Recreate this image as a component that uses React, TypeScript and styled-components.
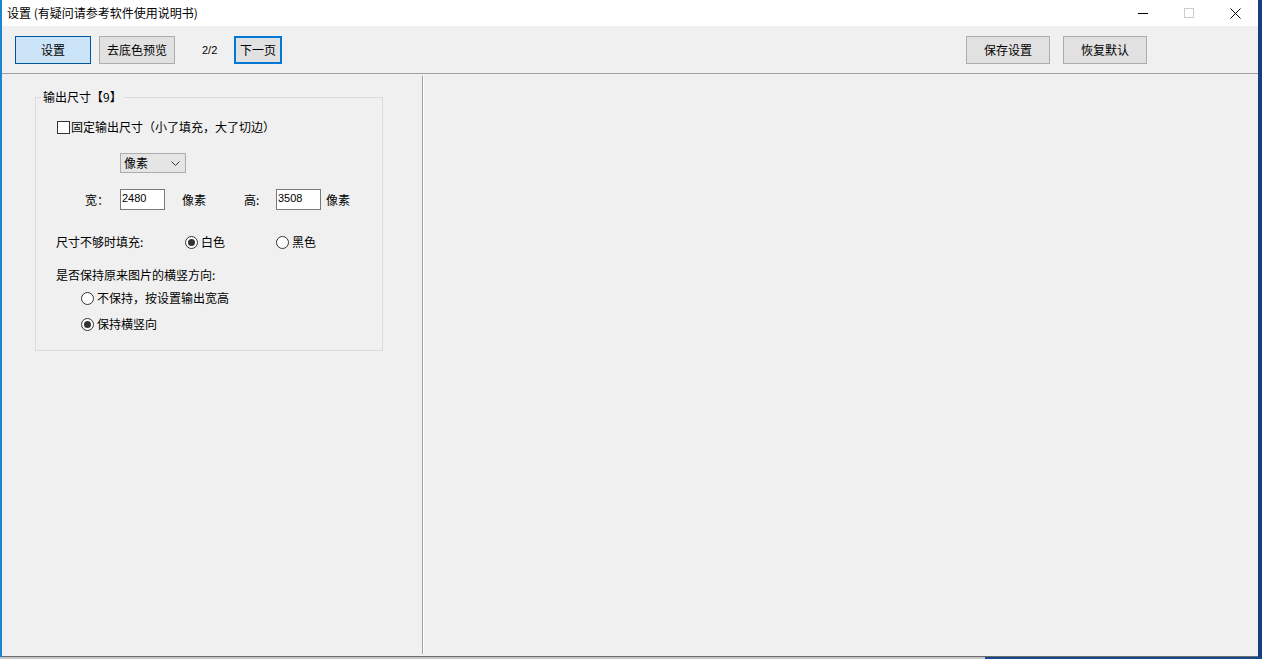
import styled, { createGlobalStyle } from 'styled-components';

const GlobalStyle = createGlobalStyle`
  html, body {
    margin: 0;
    padding: 0;
    overflow: hidden;
  }
  body {
    font-family: "Noto Sans CJK SC", "Liberation Sans", sans-serif;
    font-size: 12px;
    color: #000;
  }
`;

const Desktop = styled.div`
  width: 1262px;
  height: 659px;
  display: flex;
  flex-direction: column;
  background: #17488c;
`;

const Main = styled.div`
  display: flex;
  height: 657px;
`;

const LeftEdge = styled.div`
  width: 2px;
  background: #1b86cf;
`;

const RightEdge = styled.div`
  flex: 1;
  background: #163f7f;
`;

const Window = styled.div`
  width: 1256px;
  display: flex;
  flex-direction: column;
  background: #f0f0f0;
  border-bottom: 1px solid #6b6b6b;
  box-sizing: border-box;
`;

const BottomStrip = styled.div`
  display: flex;
  height: 2px;
`;

const StripPart = styled.div<{ $w?: number; $color: string }>`
  width: ${({ $w }) => ($w ? `${$w}px` : 'auto')};
  flex: ${({ $w }) => ($w ? 'none' : '1')};
  background: ${({ $color }) => $color};
`;

const TitleBar = styled.div`
  height: 26px;
  background: #fff;
  display: flex;
  align-items: center;
  flex-shrink: 0;
`;

const Title = styled.div`
  padding-left: 5px;
  line-height: 16px;
  flex: 1;
  white-space: nowrap;
`;

const Controls = styled.div`
  display: flex;
  height: 26px;
`;

const CtrlBtn = styled.div`
  width: 46px;
  height: 26px;
  display: flex;
  align-items: center;
  justify-content: center;
`;

const Toolbar = styled.div`
  height: 47px;
  display: flex;
  align-items: center;
  padding: 0 111px 0 13px;
  border-bottom: 1px solid #a0a0a0;
  flex-shrink: 0;
`;

const Btn = styled.div<{ $w: number; $variant?: 'selected' | 'focus' }>`
  width: ${({ $w }) => $w}px;
  height: 28px;
  box-sizing: border-box;
  display: flex;
  align-items: center;
  justify-content: center;
  line-height: 16px;
  background: ${({ $variant }) => ($variant === 'selected' ? '#cce4f7' : '#e1e1e1')};
  border: ${({ $variant }) =>
    $variant === 'selected'
      ? '1px solid #005499'
      : $variant === 'focus'
      ? '2px solid #0078d7'
      : '1px solid #adadad'};
`;

const Gap = styled.div<{ $w: number }>`
  width: ${({ $w }) => $w}px;
  flex-shrink: 0;
`;

const Spacer = styled.div`
  flex: 1;
`;

const PageNum = styled.div`
  font-family: "Liberation Sans", sans-serif;
  font-size: 11px;
  width: 32px;
  line-height: 16px;
`;

const Body = styled.div`
  flex: 1;
  display: flex;
  padding-top: 1px;
  min-height: 0;
`;

const LeftPanel = styled.div`
  width: 420px;
  padding: 22px 0 0 33px;
  box-sizing: border-box;
`;

const VDivider = styled.div`
  width: 1px;
  margin: 1px 0 2px;
  background: #a0a0a0;
  border-right: 1px solid #fff;
`;

const RightPanel = styled.div`
  flex: 1;
`;

const GroupBox = styled.div`
  position: relative;
  width: 348px;
  height: 254px;
  box-sizing: border-box;
  border: 1px solid #dcdcdc;
`;

const Legend = styled.span`
  position: absolute;
  top: -9px;
  left: 5px;
  padding: 0 2px;
  background: #f0f0f0;
  line-height: 16px;
`;

const Row = styled.div<{ $top: number; $indent: number; $h?: number }>`
  display: flex;
  align-items: center;
  margin-top: ${({ $top }) => $top}px;
  padding-left: ${({ $indent }) => $indent}px;
  height: ${({ $h }) => $h ?? 16}px;
  line-height: 16px;
  white-space: nowrap;
`;

const Label = styled.span<{ $w?: number; $ml?: number }>`
  display: inline-block;
  width: ${({ $w }) => ($w ? `${$w}px` : 'auto')};
  margin-left: ${({ $ml }) => $ml ?? 0}px;
  flex-shrink: 0;
`;

const CheckBox = styled.span`
  width: 13px;
  height: 13px;
  box-sizing: border-box;
  border: 1px solid #333;
  background: #fff;
  margin-right: 1px;
  flex-shrink: 0;
`;

const Radio = styled.span<{ $checked?: boolean }>`
  width: 13px;
  height: 13px;
  box-sizing: border-box;
  border: 1px solid #333;
  border-radius: 50%;
  background: #fff;
  margin-right: 3px;
  flex-shrink: 0;
  display: flex;
  align-items: center;
  justify-content: center;

  &::after {
    content: '';
    display: ${({ $checked }) => ($checked ? 'block' : 'none')};
    width: 7px;
    height: 7px;
    border-radius: 50%;
    background: #333;
  }
`;

const Option = styled.span<{ $w?: number }>`
  display: inline-flex;
  align-items: center;
  width: ${({ $w }) => ($w ? `${$w}px` : 'auto')};
  flex-shrink: 0;
`;

const Select = styled.div`
  width: 66px;
  height: 20px;
  box-sizing: border-box;
  border: 1px solid #adadad;
  background: #e5e5e5;
  display: flex;
  align-items: center;
  justify-content: space-between;
  padding: 0 5px 0 3px;
`;

const NumInput = styled.div`
  width: 45px;
  height: 21px;
  box-sizing: border-box;
  border: 1px solid #7a7a7a;
  background: #fff;
  font-family: "Liberation Sans", sans-serif;
  font-size: 11px;
  line-height: 17px;
  padding-left: 1px;
  flex-shrink: 0;
`;

export default function App() {
  return (
    <>
      <GlobalStyle />
      <Desktop>
        <Main>
          <LeftEdge />
          <Window>
            <TitleBar>
              <Title>设置 (有疑问请参考软件使用说明书)</Title>
              <Controls>
                <CtrlBtn>
                  <svg width="10" height="10" viewBox="0 0 10 10">
                    <path d="M0 5.5h10" stroke="#000" strokeWidth="1" />
                  </svg>
                </CtrlBtn>
                <CtrlBtn>
                  <svg width="10" height="10" viewBox="0 0 10 10">
                    <rect x="0.5" y="0.5" width="9" height="9" fill="none" stroke="#cccccc" strokeWidth="1" />
                  </svg>
                </CtrlBtn>
                <CtrlBtn>
                  <svg width="11" height="11" viewBox="0 0 11 11">
                    <path d="M0.5 0.5l10 10M10.5 0.5l-10 10" stroke="#000" strokeWidth="1" />
                  </svg>
                </CtrlBtn>
              </Controls>
            </TitleBar>

            <Toolbar>
              <Btn $w={76} $variant="selected">设置</Btn>
              <Gap $w={8} />
              <Btn $w={76}>去底色预览</Btn>
              <Gap $w={27} />
              <PageNum>2/2</PageNum>
              <Btn $w={48} $variant="focus">下一页</Btn>
              <Spacer />
              <Btn $w={84}>保存设置</Btn>
              <Gap $w={13} />
              <Btn $w={84}>恢复默认</Btn>
            </Toolbar>

            <Body>
              <LeftPanel>
                <GroupBox>
                  <Legend>输出尺寸【9】</Legend>

                  <Row $top={21} $indent={21}>
                    <CheckBox />
                    固定输出尺寸（小了填充，大了切边）
                  </Row>

                  <Row $top={18} $indent={84} $h={20}>
                    <Select>
                      <span>像素</span>
                      <svg width="9" height="5" viewBox="0 0 9 5">
                        <path d="M0.5 0.5l4 4 4-4" fill="none" stroke="#333" strokeWidth="1" />
                      </svg>
                    </Select>
                  </Row>

                  <Row $top={16} $indent={49} $h={21}>
                    <Label $w={35}>宽：</Label>
                    <NumInput>2480</NumInput>
                    <Label $w={62} $ml={17}>像素</Label>
                    <Label $w={32}>高:</Label>
                    <NumInput>3508</NumInput>
                    <Label $ml={5}>像素</Label>
                  </Row>

                  <Row $top={24} $indent={20}>
                    <Label $w={129}>尺寸不够时填充:</Label>
                    <Option $w={91}>
                      <Radio $checked />
                      白色
                    </Option>
                    <Option>
                      <Radio />
                      黑色
                    </Option>
                  </Row>

                  <Row $top={17} $indent={20}>
                    是否保持原来图片的横竖方向:
                  </Row>

                  <Row $top={7} $indent={45}>
                    <Radio />
                    不保持，按设置输出宽高
                  </Row>

                  <Row $top={10} $indent={45}>
                    <Radio $checked />
                    保持横竖向
                  </Row>
                </GroupBox>
              </LeftPanel>
              <VDivider />
              <RightPanel />
            </Body>
          </Window>
          <RightEdge />
        </Main>
        <BottomStrip>
          <StripPart $w={985} $color="#c8c8c8" />
          <StripPart $color="#17488c" />
        </BottomStrip>
      </Desktop>
    </>
  );
}
